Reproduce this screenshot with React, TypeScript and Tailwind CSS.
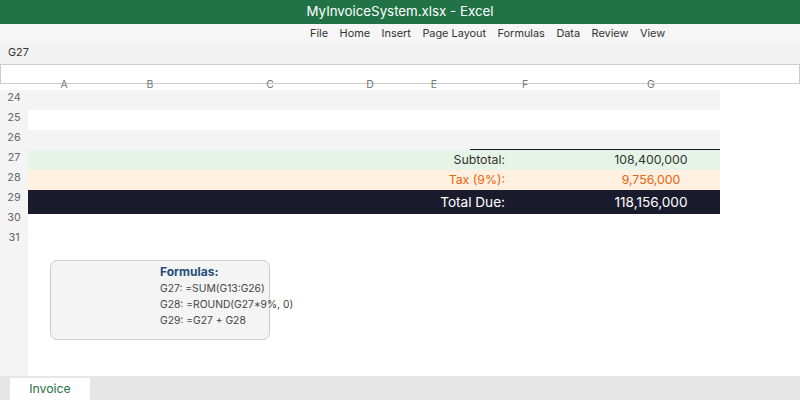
import React from "react";

const menuItems = ["File", "Home", "Insert", "Page Layout", "Formulas", "Data", "Review", "View"];

// column widths in px, starting right after the row-number gutter
const columns = [
  { key: "A", width: 72 },
  { key: "B", width: 100 },
  { key: "C", width: 140 },
  { key: "D", width: 60 },
  { key: "E", width: 68 },
  { key: "F", width: 114 },
  { key: "G", width: 138 },
];

const rowNumbers = [24, 25, 26, 27, 28, 29, 30, 31];

const formulas = ["G27: =SUM(G13:G26)", "G28: =ROUND(G27*9%, 0)", "G29: =G27 + G28"];

function TotalRow({
  label,
  value,
  className,
  textClass,
  height = "h-[20px]",
}: {
  label: string;
  value: string;
  className: string;
  textClass: string;
  height?: string;
}) {
  return (
    <div className={`flex w-[692px] ${height} ${className}`}>
      <div className="w-[440px]" />
      <div className={`w-[114px] flex items-center justify-end pr-[77px] whitespace-nowrap ${textClass}`}>
        {label}
      </div>
      <div className={`w-[138px] flex items-center justify-center whitespace-nowrap ${textClass}`}>
        {value}
      </div>
    </div>
  );
}

export default function App() {
  return (
    <div className="w-[800px] h-[400px] flex flex-col bg-white overflow-hidden font-[Inter,'Liberation_Sans',sans-serif]">
      {/* title bar */}
      <div className="h-[24px] bg-[#217346] flex items-center justify-center text-white text-[13.3px]">
        MyInvoiceSystem.xlsx - Excel
      </div>

      {/* ribbon menu */}
      <div className="h-[18px] bg-[#f6f6f6] flex items-center pl-[310px] gap-[11.5px] text-[10.9px] text-[#333]">
        {menuItems.map((item) => (
          <span key={item}>{item}</span>
        ))}
      </div>

      {/* name box */}
      <div className="h-[22px] bg-[#f2f2f2] flex items-center pl-[8px] text-[10.8px] text-[#333]">G27</div>

      {/* formula bar */}
      <div className="h-[20px] bg-white border border-[#cccccc]" />

      {/* column headers */}
      <div className="-mt-[7px] h-[13px] flex pl-[28px] text-[10.5px] leading-[15px] text-[#777]">
        {columns.map((c) => (
          <div key={c.key} style={{ width: c.width }} className="text-center">
            {c.key}
          </div>
        ))}
      </div>

      {/* grid */}
      <div className="flex-1 flex">
        <div className="w-[28px] bg-[#f4f4f4] flex flex-col text-[10.8px] text-[#666]">
          {rowNumbers.map((n) => (
            <div key={n} className="h-[20px] flex items-center justify-center pb-[3px]">
              {n}
            </div>
          ))}
        </div>

        <div className="flex-1 flex flex-col">
          <div className="h-[20px] w-[692px] bg-[#f4f4f4]" />
          <div className="h-[20px] w-[692px] bg-white" />
          <div className="h-[20px] w-[692px] bg-[#f4f4f4] flex items-end">
            <div className="ml-[442px] w-[250px] h-px bg-[#1b1b2f]" />
          </div>
          <TotalRow label="Subtotal:" value="108,400,000" className="bg-[#e6f4e8]" textClass="text-[12.3px] text-[#333]" />
          <TotalRow label="Tax (9%):" value="9,756,000" className="bg-[#fff0df]" textClass="text-[12.3px] text-[#e8630f]" />
          <TotalRow
            label="Total Due:"
            value="118,156,000"
            className="bg-[#1b1b2e]"
            textClass="text-[13.6px] text-white"
            height="h-[24px]"
          />

          {/* formula notes */}
          <div className="mt-[46px] ml-[22px] w-[220px] h-[80px] rounded-[7px] border border-[#cccccc] bg-[#f4f4f4] pl-[109px] pt-[3px]">
            <div className="text-[12px] leading-[16px] font-bold text-[#1f4e79]">Formulas:</div>
            {formulas.map((f) => (
              <div key={f} className="text-[10.3px] leading-[16px] text-[#444] whitespace-nowrap">
                {f}
              </div>
            ))}
          </div>
        </div>
      </div>

      {/* sheet tabs */}
      <div className="h-[24px] bg-[#e6e6e6] flex items-end pl-[10px]">
        <div className="w-[80px] h-[22px] bg-white flex items-center justify-center text-[12.3px] text-[#217346]">
          Invoice
        </div>
      </div>
    </div>
  );
}
